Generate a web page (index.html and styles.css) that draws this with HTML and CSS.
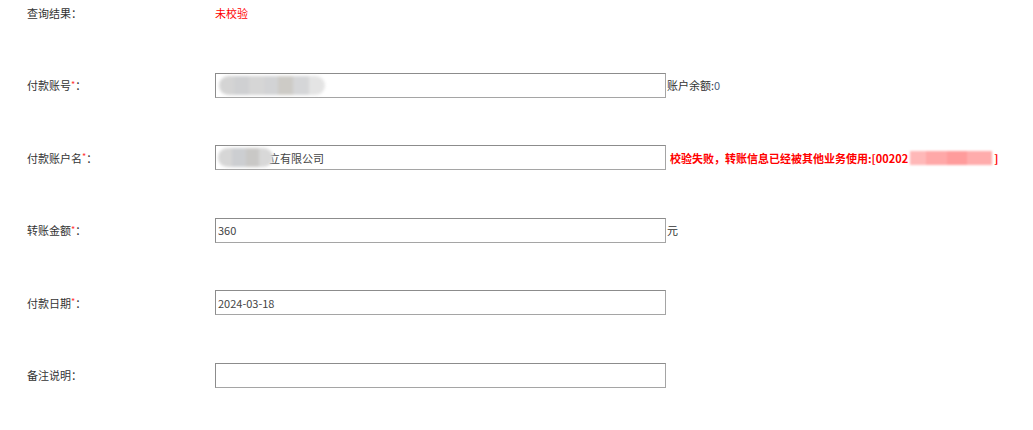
FILE: index.html
```html
<!DOCTYPE html>
<html lang="zh-CN">
<head>
  <meta charset="UTF-8" />
  <title>付款信息</title>
  <link rel="stylesheet" href="styles.css">
</head>
<body>
  <div class="form">
    <div class="label">查询结果：</div>
    <div class="value"><span class="status">未校验</span></div>

    <div class="label">付款账号<span class="req">*</span>：</div>
    <div class="value">
      <div class="field">
        <input type="text" value="" />
        <span class="mask mask-account"></span>
      </div>
      <span class="after">账户余额:<span class="num">0</span></span>
    </div>

    <div class="label">付款账户名<span class="req">*</span>：</div>
    <div class="value">
      <div class="field">
        <input type="text" value="立有限公司" class="shift" />
        <span class="mask mask-name"></span>
      </div>
      <span class="error">校验失败，转账信息已经被其他业务使用:[00202<span class="mask-code"></span>]</span>
    </div>

    <div class="label">转账金额<span class="req">*</span>：</div>
    <div class="value">
      <div class="field"><input type="text" value="360" /></div>
      <span class="after">元</span>
    </div>

    <div class="label">付款日期<span class="req">*</span>：</div>
    <div class="value">
      <div class="field"><input type="text" value="2024-03-18" /></div>
    </div>

    <div class="label">备注说明：</div>
    <div class="value">
      <div class="field"><input type="text" value="" /></div>
    </div>
  </div>
</body>
</html>
```

FILE: styles.css
```css
body {
  margin: 0;
  font-family: "Noto Sans CJK SC", "Liberation Sans", sans-serif;
  font-size: 11px;
  color: #333;
  background: #fff;
}
.form {
  display: grid;
  grid-template-columns: 188px 1fr;
  grid-auto-rows: 25px;
  row-gap: 47.5px;
  padding-left: 27px;
}
.label, .value {
  display: flex;
  align-items: center;
  white-space: nowrap;
}
.req {
  color: #f33;
  font-size: 9px;
  align-self: flex-start;
  margin-top: 5px;
}
.status {
  color: #f00;
}
.field {
  position: relative;
  width: 451px;
  height: 25px;
}
.field input {
  box-sizing: border-box;
  width: 100%;
  height: 100%;
  margin: 0;
  padding: 0 2px;
  border: 1px solid #a5a5a5;
  border-top-color: #8c8c8c;
  border-left-color: #8c8c8c;
  font-family: inherit;
  font-size: 11px;
  color: #444;
  outline: none;
}
.field input.shift {
  padding-left: 53px;
}
.mask {
  position: absolute;
  top: 3px;
  height: 19px;
  border-radius: 10px;
  filter: blur(1.5px);
}
.mask-account {
  left: 4px;
  width: 106px;
  background: linear-gradient(90deg, #d4d4d4 0 14%, #cfd0d2 14% 28%, #d6d6d6 28% 42%, #d2d3d5 42% 56%, #cdcbc6 56% 70%, #d5d6d8 70% 85%, #e4e4e4 85%);
}
.mask-name {
  left: 3px;
  width: 55px;
  background: linear-gradient(90deg, #d6d6d6 0 25%, #ccced1 25% 50%, #c9c8c6 50% 75%, #d8d8d8 75%);
}
.after {
  margin-left: 1px;
}
.num {
  color: #4a5a78;
}
.error {
  margin-left: 4px;
  color: #f00;
  font-weight: bold;
  display: flex;
  align-items: center;
}
.mask-code {
  display: inline-block;
  width: 82px;
  height: 14px;
  margin: 0 2px;
  background: linear-gradient(90deg, #ffb8b8 0 20%, #ffa8a8 20% 45%, #ff9c9c 45% 70%, #ffacac 70%);
  filter: blur(1px);
}
```
